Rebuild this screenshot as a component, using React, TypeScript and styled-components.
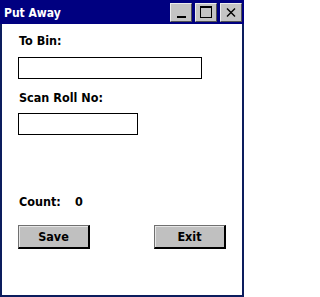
import React from "react";
import styled, { createGlobalStyle } from "styled-components";

const Global = createGlobalStyle`
  html, body { margin: 0; padding: 0; background: #ffffff; }
  * { box-sizing: border-box; }
`;

const Window = styled.div`
  width: 244px;
  height: 297px;
  display: flex;
  flex-direction: column;
  background: #ffffff;
  font-family: "DejaVu Sans Condensed", "DejaVu Sans", Verdana, sans-serif;
  font-stretch: condensed;
  font-weight: bold;
  color: #000;
`;

const TitleBar = styled.div`
  height: 24px;
  flex: none;
  background: #000080;
  display: flex;
  align-items: flex-start;
  padding: 3px 2px 0 4px;
`;

const Title = styled.div`
  flex: 1;
  color: #fff;
  font-size: 12px;
  line-height: 14px;
  padding-top: 3px;
`;

const Controls = styled.div`
  display: flex;
  gap: 3px;
`;

const CtrlButton = styled.div`
  width: 22px;
  height: 19px;
  background: #c4c4c4;
  border-top: 1px solid #ececec;
  border-left: 1px solid #ececec;
  border-right: 1px solid #505050;
  border-bottom: 1px solid #505050;
  display: flex;
  align-items: center;
  justify-content: center;
`;

const Body = styled.div`
  flex: 1;
  border: 2px solid #0c1d5e;
  border-top: none;
  padding: 10px 16px 0 16px;
  display: flex;
  flex-direction: column;
`;

const Label = styled.div<{ $mt?: number }>`
  font-size: 12.5px;
  line-height: 14px;
  padding-left: 1px;
  margin-top: ${(p) => p.$mt ?? 0}px;
`;

const Field = styled.div<{ $w: number; $mt?: number }>`
  width: ${(p) => p.$w}px;
  height: 22px;
  border: 1px solid #000;
  background: #fff;
  margin-top: ${(p) => p.$mt ?? 0}px;
`;

const CountRow = styled.div`
  display: flex;
  margin-top: 60px;
  font-size: 12.5px;
  line-height: 14px;
  padding-left: 1px;
`;

const CountLabel = styled.span`
  width: 56px;
`;

const ButtonRow = styled.div`
  display: flex;
  justify-content: space-between;
  margin-top: 16px;
`;

const Button = styled.div`
  width: 72px;
  height: 24px;
  background: #c0c0c0;
  border-top: 1px solid #707070;
  border-left: 1px solid #707070;
  border-right: 2px solid #000;
  border-bottom: 2px solid #000;
  box-shadow: inset 1px 1px 0 #e6e6e6;
  display: flex;
  align-items: center;
  justify-content: center;
  font-size: 12.5px;
  line-height: 14px;
`;

export default function App() {
  return (
    <>
      <Global />
      <Window>
        <TitleBar>
          <Title>Put Away</Title>
          <Controls>
            <CtrlButton>
              <svg width="20" height="17" viewBox="0 0 20 17">
                <rect x="6" y="12" width="9" height="2" fill="#000" />
              </svg>
            </CtrlButton>
            <CtrlButton>
              <svg width="20" height="17" viewBox="0 0 20 17">
                <rect x="4.5" y="2.5" width="11" height="11" fill="none" stroke="#000" strokeWidth="1" />
                <rect x="4" y="2" width="12" height="2" fill="#000" />
              </svg>
            </CtrlButton>
            <CtrlButton>
              <svg width="20" height="17" viewBox="0 0 20 17">
                <path d="M6 4.5 L14 12.5 M14 4.5 L6 12.5" stroke="#000" strokeWidth="1.4" />
              </svg>
            </CtrlButton>
          </Controls>
        </TitleBar>
        <Body>
          <Label>To Bin:</Label>
          <Field $w={184} $mt={9} />
          <Label $mt={12}>Scan Roll No:</Label>
          <Field $w={120} $mt={8} />
          <CountRow>
            <CountLabel>Count:</CountLabel>
            <span>0</span>
          </CountRow>
          <ButtonRow>
            <Button>Save</Button>
            <Button>Exit</Button>
          </ButtonRow>
        </Body>
      </Window>
    </>
  );
}
